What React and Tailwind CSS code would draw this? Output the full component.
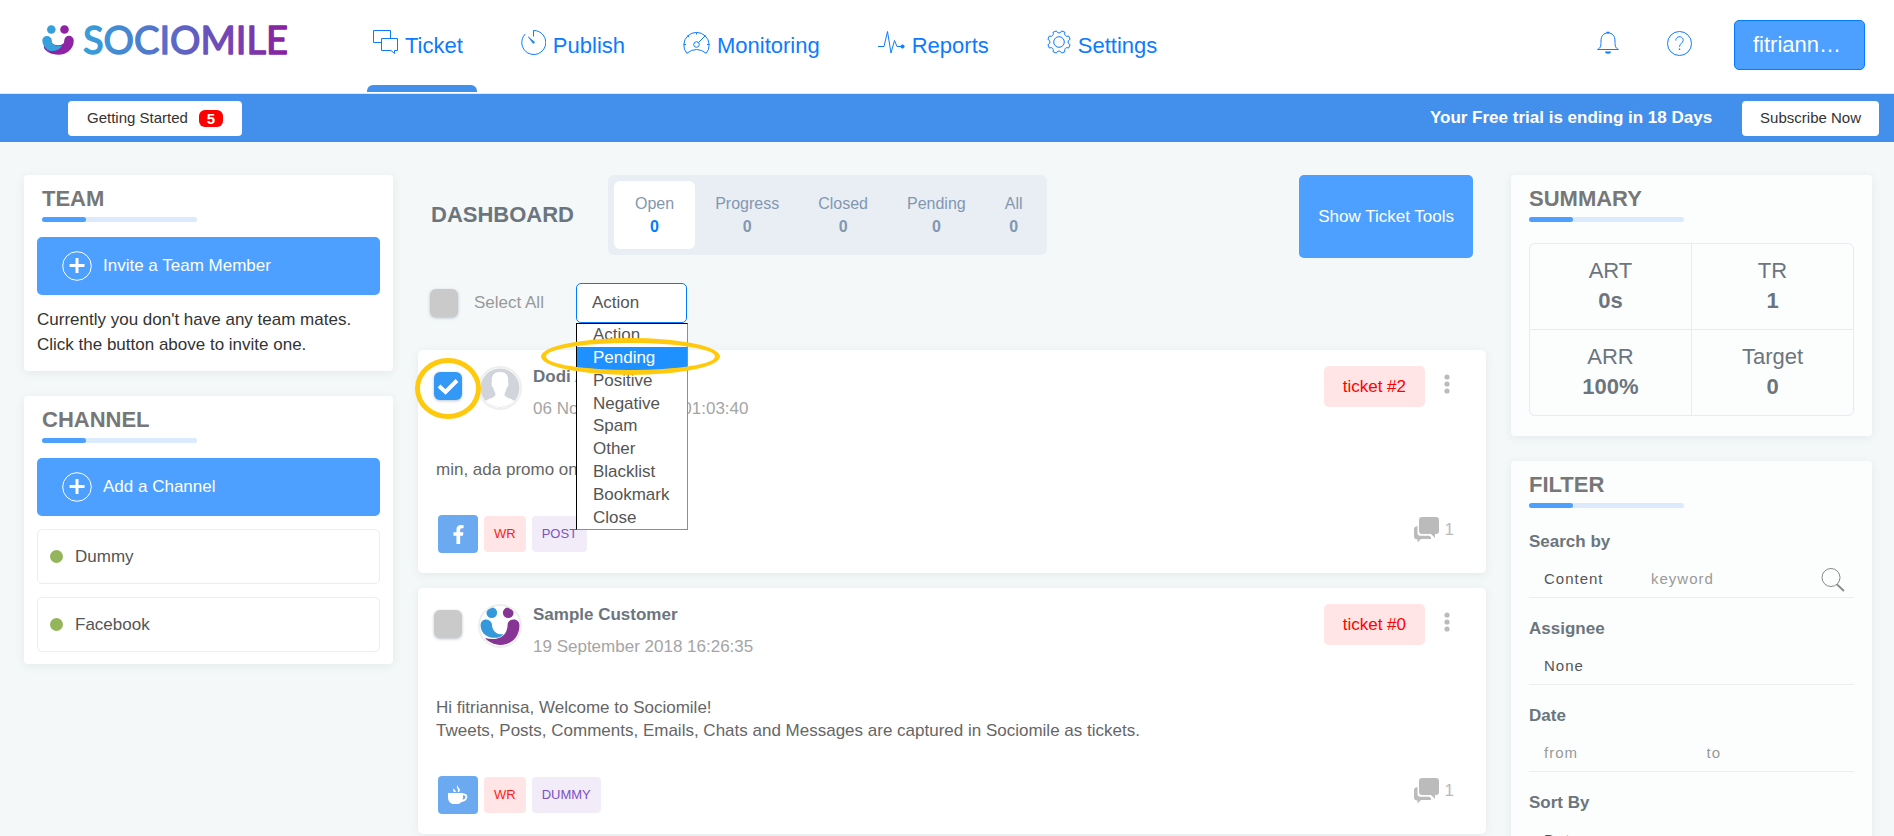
import React, { useState } from "react";
import { FaFacebookF } from "react-icons/fa";

const ACTIONS = [
  "Action",
  "Pending",
  "Positive",
  "Negative",
  "Spam",
  "Other",
  "Blacklist",
  "Bookmark",
  "Close",
];

const STATUS_TABS = [
  { label: "Open", count: 0 },
  { label: "Progress", count: 0 },
  { label: "Closed", count: 0 },
  { label: "Pending", count: 0 },
  { label: "All", count: 0 },
];

const STATS = [
  { label: "ART", value: "0s" },
  { label: "TR", value: "1" },
  { label: "ARR", value: "100%" },
  { label: "Target", value: "0" },
];

const TICKETS = [
  {
    id: 2,
    name: "Dodi A",
    date: "06 November 2018 01:03:40",
    message: ["min, ada promo ongkir"],
    source: "facebook",
    tag: "POST",
    comments: 1,
    highlighted: true,
  },
  {
    id: 0,
    name: "Sample Customer",
    date: "19 September 2018 16:26:35",
    message: [
      "Hi fitriannisa, Welcome to Sociomile!",
      "Tweets, Posts, Comments, Emails, Chats and Messages are captured in Sociomile as tickets.",
    ],
    source: "dummy",
    tag: "DUMMY",
    comments: 1,
  },
];

// eight teeth, joined by arcs that bend inwards
const gearPath = () => {
  const point = (deg, r) => {
    const a = (deg * Math.PI) / 180;
    return `${(12 + r * Math.cos(a)).toFixed(2)} ${(12 + r * Math.sin(a)).toFixed(2)}`;
  };
  let d = "";
  for (let i = 0; i < 8; i++) {
    const mid = i * 45 + 22.5;
    d += `${i === 0 ? "M" : "L"}${point(mid - 9, 11.4)}L${point(mid + 9, 11.4)}`;
    d += `Q${point(mid + 12, 9)} ${point(mid + 22.5, 9)}`;
    d += `Q${point(mid + 33, 9)} ${point(mid + 36, 11.4)}`;
  }
  return d + "Z";
};

const LogoMark = () => (
  <svg width="32" height="30" viewBox="0 0 32 30" aria-hidden="true">
    <circle cx="9.300" cy="4.500" r="4.300" fill="#35a0dc" />
    <circle cx="22.500" cy="4.500" r="4.300" fill="#8e24a4" />
    <path
      d="M27 15.500C27 21.500 22 25 16 25C12 25 8.500 23.500 6.500 21.500"
      fill="none"
      stroke="#8e24a4"
      strokeWidth="9.500"
      strokeLinecap="round"
    />
    <path
      d="M.3 15.500C.3 9.500 9.500 9.500 9.800 15.500C10 19.500 13 21.500 20 20.500C17 26.500 8 27.500 4.500 24C2 21.500 .3 18.500 .3 15.500Z"
      fill="#35a0dc"
    />
  </svg>
);

const SampleAvatar = () => (
  <svg viewBox="0 0 39 38" className="h-full w-full" aria-hidden="true">
    <circle cx="11.500" cy="6" r="5.200" fill="#3498db" />
    <circle cx="27.500" cy="6" r="5.200" fill="#873595" />
    <path
      d="M.6 19C-.2 12 9 10.500 11.500 16.500C12 24 15.500 27.500 23 27C18.500 33 1.500 32 .6 19Z"
      fill="#3498db"
    />
    <path
      d="M27 17C28 11 38.500 11 38.500 18.500C38.500 30 30 37.500 20 37.500C13.500 37.500 8 34.500 5 30.800C15 33.500 27 31 27 17Z"
      fill="#873595"
    />
  </svg>
);

const TicketIcon = () => (
  <svg width="25" height="25" viewBox="0 0 25 25" fill="none" stroke="currentColor">
    <path d="M8 12.500H.5V.5H17.500V8" />
    <path d="M8.500 8.500H24.500V20.500H21.500V23.500L18 20.500H8.500Z" />
  </svg>
);

const PublishIcon = () => (
  <svg width="25" height="25" viewBox="0 0 25 25" fill="none" stroke="currentColor">
    <path d="M12.500 6.500V.5A12 12 0 1 1 4.300 4" />
    <path d="M7.200 6.800L13.600 12.200L12.300 13.500Z" fill="currentColor" strokeWidth=".6" />
  </svg>
);

const MonitoringIcon = () => (
  <svg width="27" height="25" viewBox="0 0 27 25" fill="none" stroke="currentColor">
    <path d="M3.800 23.300A12.700 12.700 0 1 1 23.200 23.300Q18.500 19.500 13.500 19.500T3.800 23.300Z" />
    <path d="M.8 14.500H3M24 14.500H26.200M13.500 2.500V4.500M4.500 5.500L6 7M22.500 5.500L15.500 12.500" />
    <circle cx="13.500" cy="14.500" r="2.800" />
  </svg>
);

const ReportsIcon = () => (
  <svg width="27" height="25" viewBox="0 0 27 25" fill="none" stroke="currentColor">
    <path d="M0 16.500H6L9.500 1.500L13 23L16.500 10.500L19 16.500H24" />
    <circle cx="24.500" cy="16.500" r="1.600" fill="currentColor" />
  </svg>
);

const SettingsIcon = () => (
  <svg width="24" height="24" viewBox="0 0 24 24" fill="none" stroke="currentColor">
    <path d={gearPath()} />
    <circle cx="12" cy="12" r="5.300" />
  </svg>
);

const BellIcon = () => (
  <svg width="22" height="24" viewBox="0 0 22 24" fill="none" stroke="currentColor">
    <path d="M.5 18.500C4 17 4 14 4 10C4 5 6.500 2 11 2S18 5 18 10C18 14 18 17 21.500 18.500Z" />
    <path d="M9.500 1.500H12.500" strokeWidth="1.500" />
    <path d="M8 20.500H14C14 23.500 8 23.500 8 20.500Z" fill="currentColor" stroke="none" />
  </svg>
);

const HelpIcon = () => (
  <svg width="25" height="25" viewBox="0 0 25 25" fill="none" stroke="currentColor">
    <circle cx="12.500" cy="12.500" r="12" />
    <path d="M8.800 9.500C8.800 4.500 16.200 4.500 16.200 9.300C16.200 12 12.500 12.500 12.500 15.800" />
    <path d="M12.500 17.500V19" strokeWidth="1.400" />
  </svg>
);

const PlusIcon = () => (
  <svg width="30" height="30" viewBox="0 0 30 30" fill="none" stroke="currentColor">
    <circle cx="15" cy="15" r="14.300" />
    <path d="M15 7V22M7.500 14.500H22.500" strokeWidth="3" />
  </svg>
);

const SearchIcon = () => (
  <svg width="24" height="24" viewBox="0 0 24 24" fill="none" stroke="currentColor">
    <circle cx="10" cy="9.500" r="9" />
    <path d="M16 16.500L23 23" strokeWidth="1.800" />
  </svg>
);

const CupIcon = () => (
  <svg width="20" height="20" viewBox="0 0 20 20" fill="none">
    <path d="M0 8H15V12C15 16 13 18 10.500 19H4.500C2 18 0 16 0 12Z" fill="white" />
    <path d="M14.500 9.500C20 8.500 20 15.500 13 16" stroke="white" strokeWidth="1.800" />
    <path d="M10 0C7 3 11.500 4 9.500 7H11C14 4 9 3 10 0ZM6 3.500C3.500 5 6.500 6 5.500 7H7.500C9 5.500 5.500 5 6 3.500Z" fill="white" />
  </svg>
);

const CommentsIcon = () => (
  <svg width="26" height="26" viewBox="0 0 26 26" fill="currentColor">
    <path d="M8 0H22Q25 0 25 3V14Q25 17 22 17H21V21L17 17H8Q5 17 5 14V3Q5 0 8 0Z" />
    <path d="M3.500 9V16Q3.500 18.700 6.500 18.700H15.500L17 20.500V22H7L3.500 25.500V22.500Q0 22.500 0 19.500V12Q0 9.500 3.500 9Z" />
  </svg>
);

const NAV_ITEMS = [
  { label: "Ticket", Icon: TicketIcon, active: true },
  { label: "Publish", Icon: PublishIcon },
  { label: "Monitoring", Icon: MonitoringIcon },
  { label: "Reports", Icon: ReportsIcon },
  { label: "Settings", Icon: SettingsIcon },
];

const Header = () => (
  <header className="flex h-[94px] border-b border-[#e3e8ef] bg-white pl-[42px] pr-[29px] text-[#0d7bff]">
    <a href="#home" className="flex w-[325px] shrink-0 items-start gap-[8px] pt-[25px]" aria-label="Sociomile">
      <LogoMark />
      <svg width="220" height="40" viewBox="0 0 220 40">
        <defs>
          <linearGradient id="brand" x1="0" x2="1" y1="0" y2="0">
            <stop offset="0" stopColor="#35a0dc" />
            <stop offset=".5" stopColor="#5f62c4" />
            <stop offset="1" stopColor="#8a1f9f" />
          </linearGradient>
        </defs>
        <text
          x="1"
          y="29"
          fill="url(#brand)"
          stroke="url(#brand)"
          strokeWidth="1.400"
          strokeLinejoin="round"
          className="font-['Lato',sans-serif] text-[38px]"
        >
          SOCIOMILE
        </text>
      </svg>
    </a>
    <nav className="flex gap-[38px]">
      {NAV_ITEMS.map(({ label, Icon, active }) => (
        <a key={label} href={`#${label.toLowerCase()}`} className="flex flex-col">
          <span className="flex flex-1 items-center gap-[7px] pl-[6px] pr-[14px] pt-1.5 text-[22px] leading-7">
            <span className="mb-[7px]">
              <Icon />
            </span>
            {label}
          </span>
          <span
            className={
              active
                ? "mb-px h-[7px] rounded-t-md bg-[#4290ec]"
                : "mb-px h-[7px]"
            }
          />
        </a>
      ))}
    </nav>
    <div className="ml-auto flex items-start pt-[20px]">
      <button type="button" aria-label="Notifications" className="mr-[48px] mt-[11px]">
        <BellIcon />
      </button>
      <button type="button" aria-label="Help" className="mr-[42px] mt-[11px]">
        <HelpIcon />
      </button>
      <button
        type="button"
        className="h-[50px] w-[131px] truncate rounded-[5px] border border-[#007bff] bg-[#4da0ff] px-[18px] pb-0.5 text-left text-[22px] text-white"
      >
        fitriann…
      </button>
    </div>
  </header>
);

const TrialBar = () => (
  <div className="flex h-[48px] items-center bg-[#4290ec] pl-[68px] pr-[15px]">
    <button
      type="button"
      className="flex h-[35px] items-center gap-[11px] rounded bg-white px-[19px] text-[15px] text-[#333]"
    >
      Getting Started
      <span className="w-[24px] rounded-md bg-[#ff0000] text-[15px] font-bold leading-[17px] text-white">
        5
      </span>
    </button>
    <p className="ml-auto mr-[30px] text-[17px] font-bold text-white">
      Your Free trial is ending in 18 Days
    </p>
    <button
      type="button"
      className="h-[35px] rounded bg-white px-[18px] text-[15px] text-[#333]"
    >
      Subscribe Now
    </button>
  </div>
);

const PanelTitle = ({ children }) => (
  <div className="pb-[15px] pt-2.5">
    <h2 className="text-[22px] font-bold leading-7 text-[#777]">{children}</h2>
    <div className="mt-1 h-[5px] w-[155px] rounded-sm bg-[#dbeafd]">
      <div className="h-full w-[44px] rounded-sm bg-[#4da0ff]" />
    </div>
  </div>
);

const AddButton = ({ children }) => (
  <button
    type="button"
    className="flex h-[58px] w-full items-center gap-[11px] rounded-[5px] bg-[#4da0ff] pl-[25px] text-[17px] text-white"
  >
    <PlusIcon />
    {children}
  </button>
);

const LeftColumn = () => (
  <aside className="min-w-0 space-y-[25px]">
    <section className="rounded bg-white pb-3 shadow-[0_2px_10px_rgba(40,60,60,0.08)]">
      <div className="pl-[18px]">
        <PanelTitle>TEAM</PanelTitle>
      </div>
      <div className="px-[13px]">
        <AddButton>Invite a Team Member</AddButton>
        <p className="mb-0.5 mt-3 text-[17px] leading-[25px] text-[#333]">
          Currently you don't have any team mates. Click the button above to
          invite one.
        </p>
      </div>
    </section>

    <section className="rounded bg-white pb-3 shadow-[0_2px_10px_rgba(40,60,60,0.08)]">
      <div className="pl-[18px]">
        <PanelTitle>CHANNEL</PanelTitle>
      </div>
      <div className="space-y-[13px] px-[13px]">
        <AddButton>Add a Channel</AddButton>
        {["Dummy", "Facebook"].map((channel) => (
          <div
            key={channel}
            className="flex h-[55px] items-center gap-[12px] rounded-[5px] border border-[#e9eef5] pl-[12px] text-[17px] text-[#555]"
          >
            <span className="h-[13px] w-[13px] rounded-full bg-[#95b55c]" />
            {channel}
          </div>
        ))}
      </div>
    </section>
  </aside>
);

const StatusTabs = () => {
  const [current, setCurrent] = useState("Open");

  return (
    <div className="flex gap-px rounded-md bg-[#e9eef5] p-1.5">
      {STATUS_TABS.map((tab) => {
        const active = tab.label === current;
        return (
          <button
            key={tab.label}
            type="button"
            onClick={() => setCurrent(tab.label)}
            className={
              active
                ? "rounded-md bg-white px-[21px] py-[11px] text-[16px] leading-[23px] text-[#8297b0]"
                : "rounded-md px-[19px] py-[11px] text-[16px] leading-[23px] text-[#8297b0]"
            }
          >
            <span className="block">{tab.label}</span>
            <span className={active ? "block font-bold text-[#007bff]" : "block font-bold"}>
              {tab.count}
            </span>
          </button>
        );
      })}
    </div>
  );
};

const CheckBox = ({ label, checked, onChange }) => (
  <span className="relative block h-[28px] w-[28px] shrink-0">
    <input
      type="checkbox"
      aria-label={label}
      checked={checked}
      onChange={onChange}
      className="h-full w-full appearance-none rounded-md bg-[#cacaca] shadow-[0_1px_3px_rgba(60,80,110,0.35)] checked:bg-[#3498f7]"
    />
    {checked && (
      <svg
        viewBox="0 0 28 28"
        className="pointer-events-none absolute inset-0"
        fill="none"
        stroke="white"
        strokeWidth="4"
      >
        <path d="M5 14L11.500 20L23 8.500" />
      </svg>
    )}
  </span>
);

const ActionMenu = () => {
  const [action, setAction] = useState("Action");

  return (
    <div className="relative w-[111px]">
      <select
        aria-label="Action"
        value={action}
        onChange={(e) => setAction(e.target.value)}
        className="h-[40px] w-full appearance-none rounded-[5px] border border-[#007bff] bg-white px-[15px] text-[17px] text-[#555]"
      >
        {ACTIONS.map((item) => (
          <option key={item}>{item}</option>
        ))}
      </select>
      <ul
        role="listbox"
        aria-label="Action options"
        className="absolute left-0 top-[40px] z-10 grid h-[207px] w-[112px] grid-rows-9 border border-[#6a93cf] border-l-black border-t-black bg-white text-[17px] text-[#555]"
      >
        {ACTIONS.map((item) => (
          <li
            key={item}
            role="option"
            aria-selected={item === "Pending"}
            onClick={() => setAction(item)}
            className={
              item === "Pending"
                ? "flex min-h-0 items-center bg-[#1e90ff] pl-[16px] leading-5 text-white"
                : "flex min-h-0 items-center pl-[16px] leading-5"
            }
          >
            {item}
          </li>
        ))}
      </ul>
      <span className="pointer-events-none absolute -left-[35px] top-[55px] z-20 h-[37px] w-[179px] rounded-[50%] border-[5px] border-[#ffc90e]" />
    </div>
  );
};

const Avatar = ({ source }) => (
  <span className="block h-[44px] w-[44px] shrink-0 overflow-hidden rounded-full border-2 border-[#eee] bg-white">
    {source === "facebook" ? (
      <svg viewBox="0 0 40 40">
        <circle cx="20" cy="20" r="19.500" fill="#d1d5db" />
        <path
          d="M20 4C13 4 11 9 12 14C11 15 11.500 19 13.200 19.500C14 23 15 24 15.500 26C15.500 30 9 30 5.500 33C14 41 26 41 34.500 33C31 30 24.500 30 24.500 26C25 24 26 23 26.800 19.500C28.500 19 29 15 28 14C29 9 27 4 20 4Z"
          fill="white"
        />
      </svg>
    ) : (
      <SampleAvatar />
    )}
  </span>
);

const TicketCard = ({ ticket }) => {
  const [checked, setChecked] = useState(!!ticket.highlighted);

  return (
    <article className="rounded-[5px] bg-white pb-5 pt-4 shadow-[0_2px_10px_rgba(40,60,60,0.08)]">
      <div className="flex items-start pl-4 pr-[36px]">
        <div className="relative mt-1.5">
          <CheckBox
            label={`Select ticket #${ticket.id}`}
            checked={checked}
            onChange={() => setChecked(!checked)}
          />
          {ticket.highlighted && (
            <span className="pointer-events-none absolute -left-[19px] -top-[14px] z-20 h-[61px] w-[66px] rounded-[50%] border-[5px] border-[#ffc90e]" />
          )}
        </div>
        <div className="ml-[16px]">
          <Avatar source={ticket.source} />
        </div>
        <div className="ml-[11px] text-[17px] leading-[22px]">
          <h3 className="font-bold text-[#6c757d]">{ticket.name}</h3>
          <p className="mt-2.5 text-[#a5a5a5]">{ticket.date}</p>
        </div>
        <a
          href={`#ticket-${ticket.id}`}
          className="ml-auto rounded-[5px] bg-[#ffe5e5] px-[19px] text-[17px] leading-[41px] text-[#ff0000]"
        >
          ticket #{ticket.id}
        </a>
        <button type="button" aria-label="Ticket menu" className="ml-[19px] mt-[7px] text-[#bbb]">
          <svg width="6" height="22" viewBox="0 0 6 22" fill="currentColor">
            <circle cx="3" cy="4" r="2.600" />
            <circle cx="3" cy="11" r="2.600" />
            <circle cx="3" cy="18" r="2.600" />
          </svg>
        </button>
      </div>
      <div className="mt-[38px] px-[18px] text-[17px] leading-[23px] text-[#666]">
        {ticket.message.map((line) => (
          <p key={line}>{line}</p>
        ))}
      </div>
      <div className="mt-[34px] flex items-center gap-[6px] pl-5 pr-8 text-[13px] leading-[36px]">
        <span className="flex h-[38px] w-[40px] items-center justify-center rounded bg-[#6ba9f1] text-white">
          {ticket.source === "facebook" ? <FaFacebookF size={19} /> : <CupIcon />}
        </span>
        <span className="rounded bg-[#ffe5e5] px-2.5 text-[#ff1a1a]">WR</span>
        <span className="rounded bg-[#f2ecf9] px-2.5 text-[#7b52c4]">{ticket.tag}</span>
        <span className="mb-2 ml-auto flex items-center gap-[5px] text-[17px] leading-[22px] text-[#bbb]">
          <CommentsIcon />
          {ticket.comments}
        </span>
      </div>
    </article>
  );
};

const Dashboard = () => {
  const [allSelected, setAllSelected] = useState(false);

  return (
    <main className="min-w-0">
      <div className="flex items-start px-[13px]">
        <h1 className="mr-[34px] mt-[26px] text-[22px] font-bold leading-7 text-[#6c757d]">
          DASHBOARD
        </h1>
        <StatusTabs />
        <button
          type="button"
          className="ml-auto h-[83px] rounded-[5px] bg-[#4da0ff] px-[19px] text-[17px] text-white"
        >
          Show Ticket Tools
        </button>
      </div>
      <div className="mb-[27px] mt-[25px] flex items-center pl-[12px]">
        <label className="mr-[32px] flex items-center gap-[16px] text-[17px] text-[#999]">
          <CheckBox
            label="Select All"
            checked={allSelected}
            onChange={() => setAllSelected(!allSelected)}
          />
          Select All
        </label>
        <ActionMenu />
      </div>
      <div className="space-y-[15px]">
        {TICKETS.map((ticket) => (
          <TicketCard key={ticket.id} ticket={ticket} />
        ))}
      </div>
    </main>
  );
};

const FilterField = ({ label, htmlFor, children }) => (
  <div className="mb-5">
    <label htmlFor={htmlFor} className="block text-[17px] font-bold leading-[22px] text-[#6c757d]">
      {label}
    </label>
    <div className="mt-[9px] flex h-9 items-center border-b border-[#e9eeee] text-[15px] tracking-[1px] text-[#555]">
      {children}
    </div>
  </div>
);

const RightColumn = () => (
  <aside className="min-w-0 space-y-[25px]">
    <section className="rounded bg-[#fcfefe] pb-5 shadow-[0_2px_10px_rgba(40,60,60,0.08)]">
      <div className="pl-[18px]">
        <PanelTitle>SUMMARY</PanelTitle>
      </div>
      <dl className="mx-[18px] mt-1.5 grid grid-cols-2 gap-px overflow-hidden rounded-md border border-[#e6ecf5] bg-[#e6ecf5]">
        {STATS.map((stat) => (
          <div
            key={stat.label}
            className="bg-[#fcfefe] pb-[13px] pt-3 text-center text-[22px] leading-[30px] text-[#6c757d]"
          >
            <dt>{stat.label}</dt>
            <dd className="font-bold">{stat.value}</dd>
          </div>
        ))}
      </dl>
    </section>

    <section className="rounded bg-[#fcfefe] pb-1 shadow-[0_2px_10px_rgba(40,60,60,0.08)]">
      <div className="pl-[18px]">
        <PanelTitle>FILTER</PanelTitle>
      </div>
      <div className="px-[18px] pt-2">
        <FilterField label="Search by" htmlFor="search-by">
          <select id="search-by" className="w-[107px] appearance-none pl-[15px] tracking-[1px]">
            <option>Content</option>
            <option>Customer</option>
          </select>
          <input
            type="text"
            aria-label="Keyword"
            placeholder="keyword"
            className="min-w-0 flex-1 pl-[15px] tracking-[1px] placeholder:text-[#999]"
          />
          <button type="button" aria-label="Search" className="mr-[9px] text-[#888]">
            <SearchIcon />
          </button>
        </FilterField>
        <FilterField label="Assignee" htmlFor="assignee">
          <select id="assignee" className="w-full appearance-none pl-[15px] tracking-[1px]">
            <option>None</option>
          </select>
        </FilterField>
        <FilterField label="Date" htmlFor="date-from">
          <input
            id="date-from"
            type="text"
            placeholder="from"
            className="w-1/2 pl-[15px] tracking-[1px] placeholder:text-[#999]"
          />
          <input
            type="text"
            aria-label="Date to"
            placeholder="to"
            className="w-1/2 pl-[15px] tracking-[1px] placeholder:text-[#999]"
          />
        </FilterField>
        <FilterField label="Sort By" htmlFor="sort-by">
          <select id="sort-by" className="w-full appearance-none pl-[15px] tracking-[1px]">
            <option>Date</option>
          </select>
        </FilterField>
      </div>
    </section>
  </aside>
);

const App = () => {
  return (
    <div className="min-h-screen bg-[#f4f8f9] font-['Liberation_Sans',Arial,sans-serif]">
      <Header />
      <TrialBar />
      <div className="grid grid-cols-[minmax(0,369fr)_minmax(0,1068fr)_minmax(0,361fr)] items-start gap-[25px] pb-6 pl-[24px] pr-[22px] pt-[33px]">
        <LeftColumn />
        <Dashboard />
        <RightColumn />
      </div>
    </div>
  );
};

export default App;
